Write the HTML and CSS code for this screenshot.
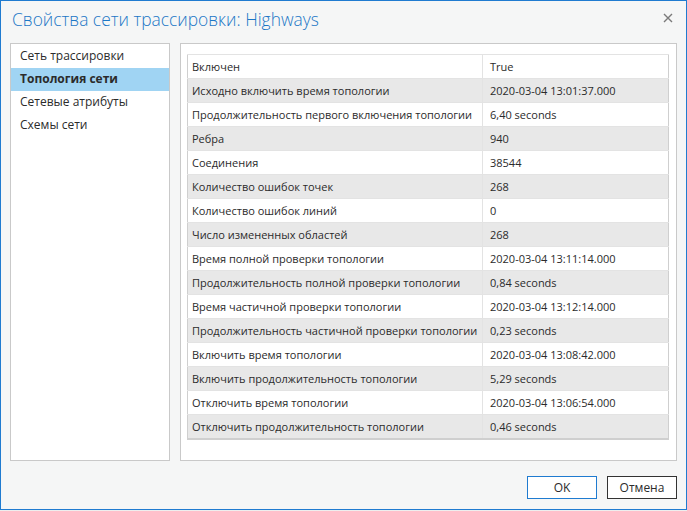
FILE: index.html
```html
<!DOCTYPE html>
<html lang="ru">
<head>
<meta charset="utf-8">
<link rel="stylesheet" href="styles.css">
</head>
<body>
<div class="window">
  <div class="titlebar">
    <div class="title">Свойства сети трассировки: Highways</div>
    <svg class="close" width="10" height="10" viewBox="0 0 10 10"><path d="M1 1 L9 9 M9 1 L1 9" stroke="#7a7a7a" stroke-width="1.4" fill="none"/></svg>
  </div>
  <div class="main">
    <div class="nav">
      <div class="nav-item">Сеть трассировки</div>
      <div class="nav-item selected">Топология сети</div>
      <div class="nav-item">Сетевые атрибуты</div>
      <div class="nav-item">Схемы сети</div>
    </div>
    <div class="content">
      <table class="props">
        <tr><td>Включен</td><td>True</td></tr>
        <tr><td>Исходно включить время топологии</td><td>2020-03-04 13:01:37.000</td></tr>
        <tr><td>Продолжительность первого включения топологии</td><td>6,40 seconds</td></tr>
        <tr><td>Ребра</td><td>940</td></tr>
        <tr><td>Соединения</td><td>38544</td></tr>
        <tr><td>Количество ошибок точек</td><td>268</td></tr>
        <tr><td>Количество ошибок линий</td><td>0</td></tr>
        <tr><td>Число измененных областей</td><td>268</td></tr>
        <tr><td>Время полной проверки топологии</td><td>2020-03-04 13:11:14.000</td></tr>
        <tr><td>Продолжительность полной проверки топологии</td><td>0,84 seconds</td></tr>
        <tr><td>Время частичной проверки топологии</td><td>2020-03-04 13:12:14.000</td></tr>
        <tr><td>Продолжительность частичной проверки топологии</td><td>0,23 seconds</td></tr>
        <tr><td>Включить время топологии</td><td>2020-03-04 13:08:42.000</td></tr>
        <tr><td>Включить продолжительность топологии</td><td>5,29 seconds</td></tr>
        <tr><td>Отключить время топологии</td><td>2020-03-04 13:06:54.000</td></tr>
        <tr><td>Отключить продолжительность топологии</td><td>0,46 seconds</td></tr>
      </table>
    </div>
  </div>
  <div class="buttons">
    <button class="btn primary">OK</button>
    <button class="btn">Отмена</button>
  </div>
</div>
</body>
</html>
```
FILE: styles.css
```css
html, body {
  margin: 0;
  padding: 0;
  background: #eeeeee;
}
body {
  width: 687px;
  height: 511px;
  font-family: "Open Sans", "Noto Sans", sans-serif;
  font-size: 11px;
  color: #2b2b2b;
}
.window {
  box-sizing: border-box;
  width: 687px;
  height: 510px;
  border: 1px solid #1f7bd0;
  background: #f5f6f6;
  display: flex;
  flex-direction: column;
}
.titlebar {
  height: 34px;
  display: flex;
  align-items: center;
  justify-content: space-between;
  padding: 0 13px 0 11px;
  flex: none;
}
.title {
  font-size: 17.4px;
  font-weight: 300;
  color: #1c77c6;
  margin-top: 1px;
}
.close {
  display: block;
}
.main {
  display: flex;
  gap: 10px;
  padding: 8px 9px 0 9px;
  height: 418px;
  flex: none;
}
.nav {
  box-sizing: border-box;
  width: 160px;
  height: 100%;
  background: #ffffff;
  border: 1px solid #c9c9c9;
  padding-top: 1px;
}
.nav-item {
  height: 23px;
  line-height: 22px;
  padding-left: 9px;
  font-size: 12px;
}
.nav-item.selected {
  background: #a0d4f3;
  font-weight: 700;
}
.content {
  box-sizing: border-box;
  flex: 1;
  height: 100%;
  background: #ffffff;
  border: 1px solid #c9c9c9;
  padding: 10px 7px 0 6px;
}
.props {
  width: 482px;
  border-collapse: collapse;
  border: 1px solid #cfcfcf;
  border-bottom: 2px solid #cfcfcf;
}
.props td {
  height: 23px;
  padding: 0 4px;
  border-top: 1px solid #e3e3e3;
  border-bottom: 1px solid #e3e3e3;
  white-space: nowrap;
  font-size: 11px;
}
.props td:first-child {
  width: 286px;
  border-right: 1px solid #e3e3e3;
}
.props td:last-child {
  padding-left: 7px;
}
.props tr:nth-child(even) td {
  background: #e8e8e8;
}
.buttons {
  display: flex;
  justify-content: flex-end;
  gap: 10px;
  padding: 15px 9px 0 0;
}
.btn {
  box-sizing: border-box;
  width: 70px;
  height: 23px;
  background: #ffffff;
  border: 1px solid #333333;
  font-family: "Open Sans", "Noto Sans", sans-serif;
  font-size: 12px;
  color: #2b2b2b;
  padding: 0;
}
.btn.primary {
  border-color: #1f7bd0;
}
```
